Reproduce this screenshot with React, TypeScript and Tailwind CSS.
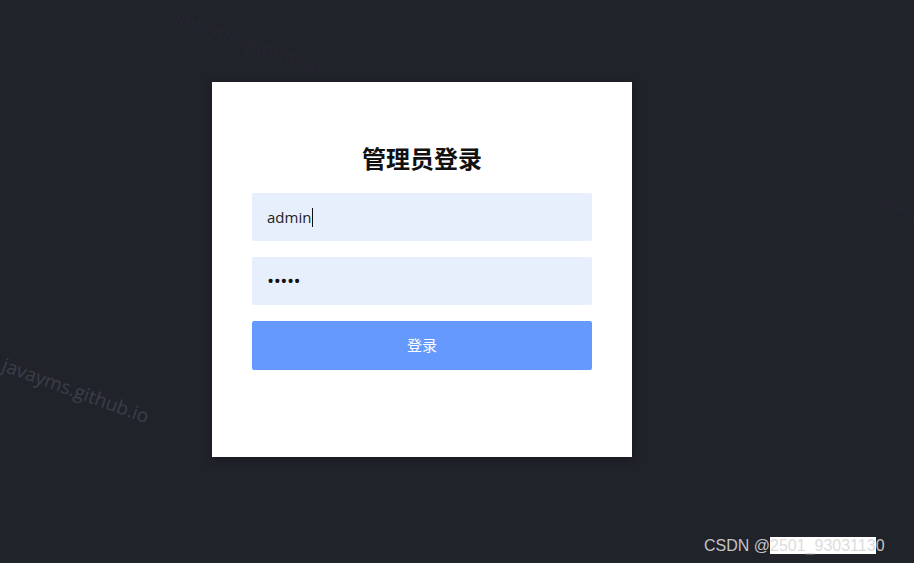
export default function App() {
  return (
    <div className="relative w-[914px] h-[563px] overflow-hidden bg-[#21232b] font-['Open_Sans','Noto_Sans_CJK_SC',sans-serif]">
      {/* watermarks */}
      <div className="pointer-events-none absolute left-[3px] top-[350px] origin-left rotate-[20deg] text-[19px] text-[#3b3e49] whitespace-nowrap">
        javayms.github.io
      </div>
      <div className="pointer-events-none absolute left-[176px] top-[2px] origin-left rotate-[20deg] text-[19px] text-[#24262f] whitespace-nowrap">
        javayms.github.io
      </div>
      <div className="pointer-events-none absolute left-[880px] top-[184px] origin-left rotate-[20deg] text-[19px] text-[#24262f] whitespace-nowrap">
        javayms.github.io
      </div>

      <div className="ml-[212px] pt-[82px]">
        <div className="w-[420px] h-[375px] bg-white px-10 pt-[60px] shadow-[0_2px_8px_rgba(0,0,0,0.35)]">
          <h1 className="text-center text-[24px] leading-[32px] font-bold text-[#111] font-['Noto_Sans_CJK_SC',sans-serif]">
            管理员登录
          </h1>
          <div className="mt-[19px] flex flex-col gap-4">
            <div className="h-12 rounded-[2px] bg-[#e8effc] px-[15px] flex items-center text-[15px] text-[#222]">
              admin<span className="ml-[1px] inline-block w-[1px] h-[19px] bg-[#111]" />
            </div>
            <div className="h-12 rounded-[2px] bg-[#e8effc] px-[15px] flex items-center text-[19px] text-[#111] tracking-[-0.5px]">
              •••••
            </div>
            <button className="h-[49px] rounded-[2px] bg-[#6699fd] text-white text-[15px] font-['Noto_Sans_CJK_SC',sans-serif]">
              登录
            </button>
          </div>
        </div>
      </div>

      <div className="absolute left-[704px] top-[536px] text-[16px] leading-[20px] text-[#c4c4c4] whitespace-nowrap font-['Liberation_Sans',sans-serif]">
        CSDN @<span className="bg-white text-[#dcdcdc]">2501_9303113</span>0
      </div>
    </div>
  )
}
